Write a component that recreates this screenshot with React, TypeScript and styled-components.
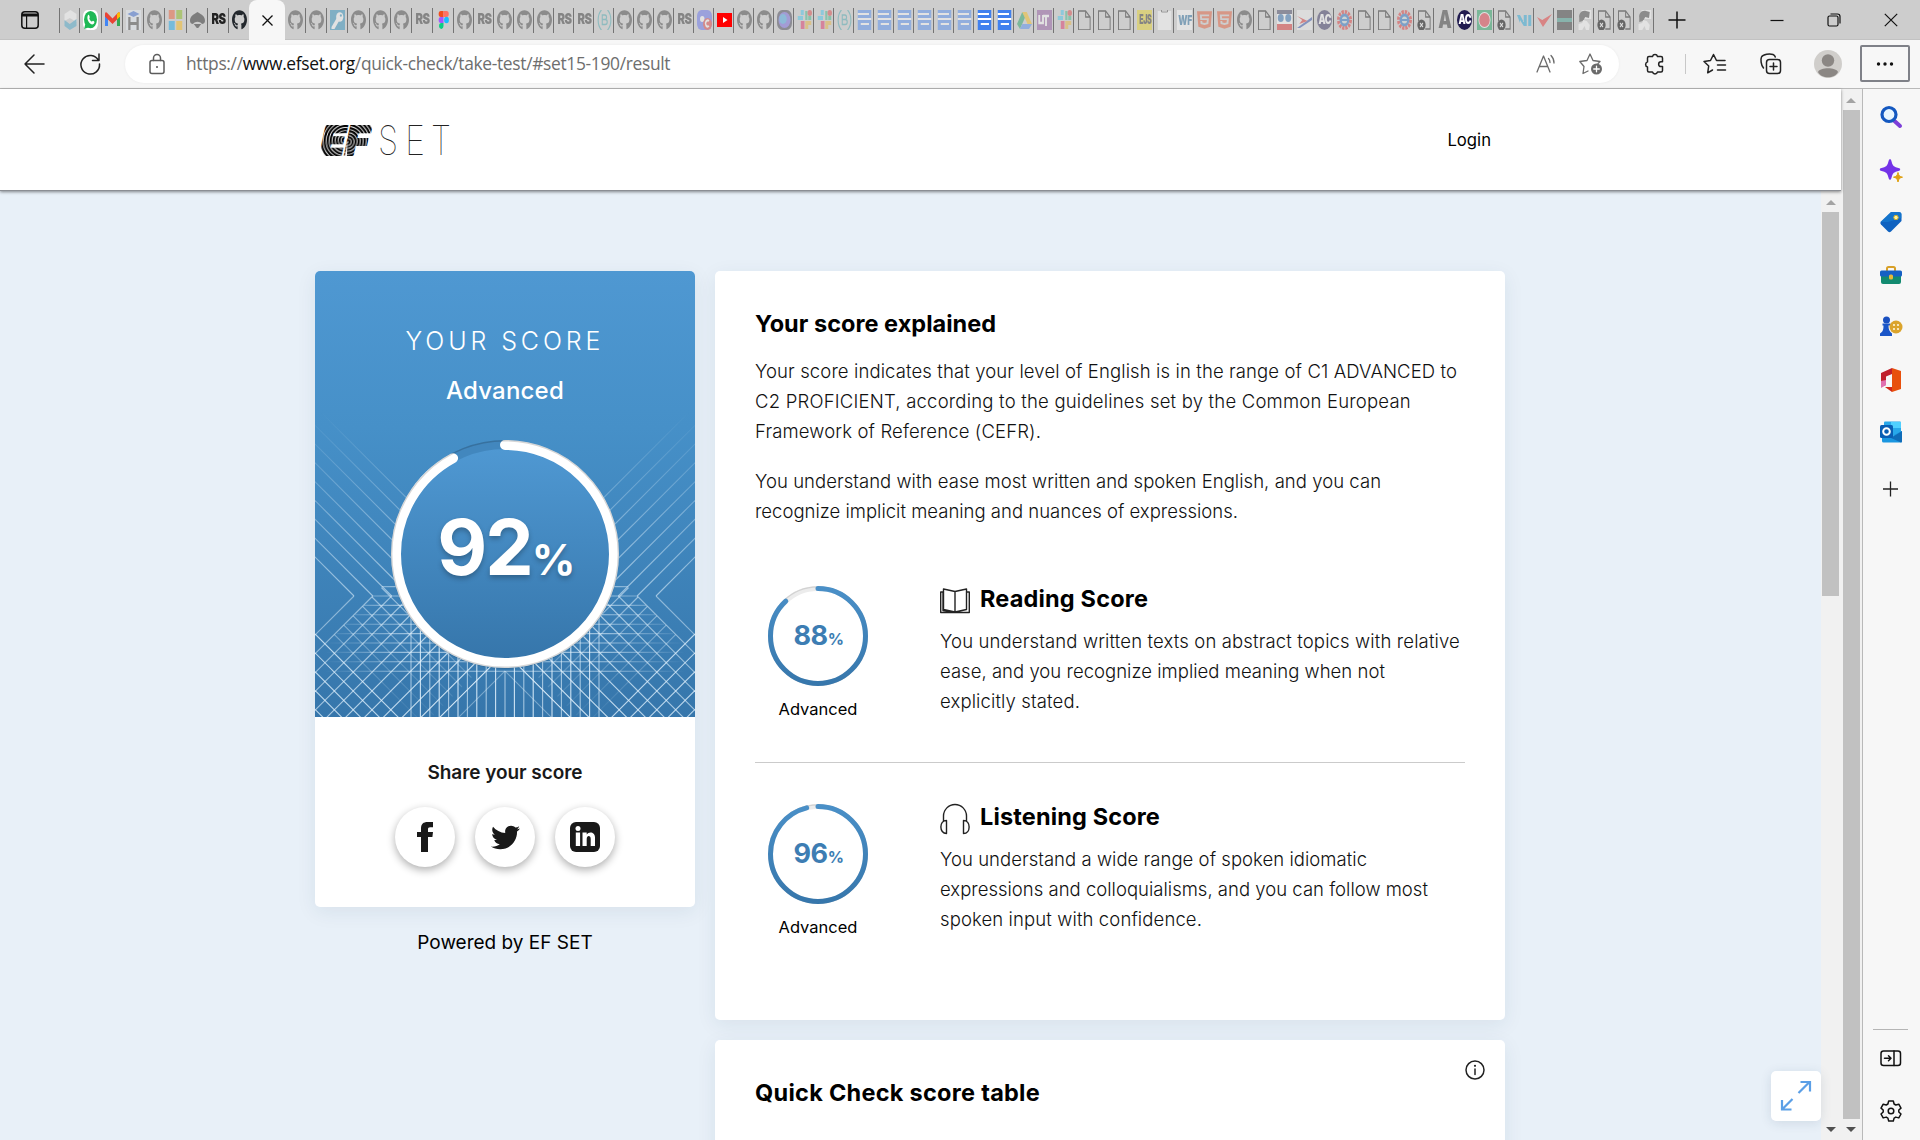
import React from "react";
import styled, { createGlobalStyle, css } from "styled-components";
import { FaGithub, FaTwitter, FaHtml5 } from "react-icons/fa";

const Global = createGlobalStyle`
  *, *::before, *::after { box-sizing: border-box; }
  body { margin: 0; background: #e8f0f8; font-family: Inter, "Liberation Sans", sans-serif; }
  p, h1, h2, h3 { margin: 0; font-weight: inherit; }
`;

const Window = styled.div`
  display: flex;
  flex-direction: column;
  width: 1920px;
  height: 1140px;
  overflow: hidden;
  background: #f7f7f7;
`;

/* ---------- tab strip ---------- */

const TabStrip = styled.div`
  display: flex;
  height: 40px;
  background: #cdcdcd;
  border-bottom: 1px solid #c2c2c2;
  flex: none;
`;
const TabActions = styled.div`
  width: 59px;
  padding: 11px 0 0 21px;
`;
const Tab = styled.div<{ $w: number; $first?: boolean; $bare?: boolean }>`
  flex: none;
  width: ${(p) => p.$w}px;
  height: 25px;
  margin-top: 8px;
  padding: 2px 0 0 3px;
  border-right: ${(p) => (p.$bare ? "0" : "1px solid #747474")};
  border-left: ${(p) => (p.$first ? "1px solid #747474" : "0")};
`;
const Favicon = styled.div<{ $dim?: boolean }>`
  width: 15px;
  height: 20px;
  display: flex;
  opacity: ${(p) => (p.$dim ? 0.42 : 1)};
  svg { width: 15px; height: 20px; display: block; flex: none; }
`;
const Letters = styled.span<{ $bg?: string; $fg: string; $size: number; $round?: boolean; $sx?: number; $sy?: number }>`
  width: 15px;
  height: 20px;
  display: flex;
  align-items: center;
  justify-content: center;
  background: ${(p) => p.$bg || "transparent"};
  color: ${(p) => p.$fg};
  border-radius: ${(p) => (p.$round ? "50%" : "0")};
  font-weight: 900;
  font-size: ${(p) => p.$size}px;
  line-height: 20px;
  letter-spacing: -0.5px;
  span { transform: scale(${(p) => p.$sx || 1}, ${(p) => p.$sy || 1}); }
`;
const ActiveTab = styled.div`
  width: 36px;
  height: 40px;
  background: #f7f7f7;
  border-radius: 8px 8px 0 0;
  display: flex;
  align-items: center;
  justify-content: center;
  flex: none;
`;
const NewTab = styled.div`
  padding: 11px 0 0 14px;
`;
const WindowButtons = styled.div`
  margin-left: auto;
  display: flex;
  align-items: center;
  gap: 43px;
  padding-right: 22px;
  height: 39px;
`;

type Kind = string;
const before: Kind[] = ["cube", "whatsapp", "gmail", "h", "gh", "ms", "hat", "RS", "GH"];
const after: Kind[] = ["gh", "gh", "key", "gh", "gh", "gh", "rs", "figma"];
const rest: Kind[] = [
  "gh", "rs", "gh", "gh", "gh", "rs", "rs", "b", "gh", "gh", "gh", "rs", "discord", "yt", "gh", "gh", "orb",
  "slack", "slack", "b", "doc", "doc", "doc", "doc", "doc", "doc", "DOC", "DOC", "drive", "ut", "slack",
  "file", "file", "file", "ejs", "bag", "wf", "html", "html", "gh", "file", "people", "flag", "ac", "e",
  "file", "file", "e", "filex", "a", "AC", "rec", "filex", "vi", "check", "bars", "gear", "filex", "filex", "gear",
];

const Box = ({ children }: { children: React.ReactNode }) => (
  <svg viewBox="0 0 20 20" preserveAspectRatio="none">{children}</svg>
);

const icons: Record<string, { dim?: boolean; el: React.ReactNode }> = {
  gh: { dim: true, el: <FaGithub color="#333" preserveAspectRatio="none" /> },
  GH: { el: <FaGithub color="#24292e" preserveAspectRatio="none" /> },
  rs: { dim: true, el: <Letters $fg="#222" $size={10.5} $sx={1.08} $sy={1.45}><span>RS</span></Letters> },
  RS: { el: <Letters $fg="#222" $size={10.5} $sx={1.08} $sy={1.45}><span>RS</span></Letters> },
  cube: { dim: true, el: <Box><path d="M10 0l8 4v8l-9-4-7 3V4z" fill="#fff" /><path d="M2 10l7 4 9-5v7l-9 4-7-4z" fill="#3aa0c8" /></Box> },
  whatsapp: { el: <Box><rect width="20" height="20" rx="6" fill="#fff" /><circle cx="10" cy="9.6" r="8.6" fill="#1fb855" /><path d="M1.5 19l1.6-5 4 3.6z" fill="#1fb855" /><path d="M6.6 5.2c.9-1 1.700-.3 2.300 1.600.4 1-.9 1.300-.3 2.300 1 1.700 2 2.200 2.900 2.500.8.200 1.100-1.200 1.900-.9 2 .9 2.100 1.300 1.600 2.300-1 1.600-3 1.900-5.500.4C6.500 11.500 4.800 8 6.600 5.200z" fill="#fff" /></Box> },
  gmail: { el: <Box><path d="M0 4v12h4V7z" fill="#4285f4" /><path d="M20 4v12h-4V7z" fill="#34a853" /><path d="M0 4c0-2 2-2 3-1l7 5.500 7-5.500c1-1 3-1 3 1v2.500L10 14 0 6.500z" fill="#ea4335" /><path d="M16 4l1-1c1-1 3-1 3 1v2.500L16 9.500z" fill="#fbbc04" /></Box> },
  h: { dim: true, el: <Box><rect width="20" height="20" fill="#e8f0fa" /><path d="M10 1l8 3-8 3-8-3z" fill="#2a62d8" /><path d="M3 7h3v5h8V7h3v13h-3v-5H6v5H3z" fill="#333" /></Box> },
  ms: { dim: true, el: <Box><path d="M1 0h8v9H1z" fill="#f25022" /><path d="M11 0h8v9h-8z" fill="#7fba00" /><path d="M1 11h8v9H1z" fill="#00a4ef" /><path d="M11 11h8v9h-8z" fill="#ffb900" /></Box> },
  hat: { dim: true, el: <Box><path d="M0 11c0-5 4-6 10-9 6 3 10 4 10 9 0 2-2 3-4 3-3-3-9-3-12 0-2 0-4-1-4-3z" fill="#111" /><path d="M5 14h10l-4 4H9z" fill="#111" /></Box> },
  key: { dim: true, el: <Box><rect width="20" height="20" fill="#1786b8" /><circle cx="13" cy="7" r="4.800" fill="#fff" /><circle cx="14.500" cy="5.500" r="1.300" fill="#1786b8" /><path d="M9 8l-7 9v2h4l6-8z" fill="#fff" /></Box> },
  figma: { el: <Box><path d="M10 1H6.500a3 3 0 000 6H10z" fill="#f24e1e" /><path d="M10 1h4a3 3 0 010 6h-4z" fill="#ff7262" /><path d="M10 7H6.500a3 3 0 000 6H10z" fill="#a259ff" /><circle cx="14" cy="10" r="3.200" fill="#1abcfe" /><path d="M10 13H6.500a3 3 0 103.500 3z" fill="#0acf83" /></Box> },
  b: { dim: true, el: <Box><g fill="none" stroke="#3aa3ac" strokeWidth="1.500"><path d="M6 0C0 5 0 15 6 20M14 0c6 5 6 15 0 20" /><path d="M7 5h3.500c3 0 3 4.500 0 4.500H7zM7 9.500h4c3.500 0 3.500 5 0 5H7z" /></g></Box> },
  discord: { dim: true, el: <Box><rect width="20" height="20" rx="6" fill="#5865f2" /><circle cx="7" cy="9" r="3" fill="#fff" /><circle cx="14" cy="14" r="6" fill="#e03030" /><path d="M16 11a3 3 0 100 5" stroke="#fff" strokeWidth="2" fill="none" /></Box> },
  yt: { el: <Box><rect y="3" width="20" height="14" fill="#f00" /><path d="M8 7l6 3-6 3z" fill="#fff" /></Box> },
  orb: { dim: true, el: <Box><rect width="20" height="20" rx="7" fill="#334" /><circle cx="10" cy="10" r="8" fill="#6a5ae0" /><circle cx="8" cy="9" r="5" fill="#38a0e8" /></Box> },
  slack: { dim: true, el: <Box><path d="M1 6h7v4H1zM5 0h4v5H5z" fill="#36c5f0" /><path d="M11 1h3v9h-3zM15 6h4v4h-4z" fill="#2eb67d" /><path d="M5 11h5v8H5z" fill="#e01e5a" /><path d="M11 11h8v4h-8zM11 15h4v4h-4z" fill="#ecb22e" /><circle cx="17" cy="3" r="3" fill="#d33" /></Box> },
  doc: { dim: true, el: <Box><path d="M1 0h18v20H1z" fill="#4285f4" /><path d="M1 4h15M1 9h18M5 14h11" stroke="#fff" strokeWidth="2" /></Box> },
  DOC: { el: <Box><path d="M1 0h18v20H1z" fill="#4080ee" /><path d="M1 4h15M1 9h18M5 14h11" stroke="#fff" strokeWidth="2" /></Box> },
  drive: { dim: true, el: <Box><path d="M7 2L0 14l4 5 7-12z" fill="#0f9d58" /><path d="M7 2h6l7 12h-6z" fill="#fbbc04" /><path d="M7 14h13l-4 5H4z" fill="#4285f4" /></Box> },
  ut: { dim: true, el: <Box><path d="M0 0h20v20H0z" fill="#8a4a9a" /><path d="M3 5v8h5V5m0 1h8M12 6v10" stroke="#fff" strokeWidth="2.500" fill="none" /></Box> },
  file: { el: <Box><path d="M2 1h9.500l6 6v13H2zM11.500 1v6h6" fill="none" stroke="#7a7a7a" strokeWidth="1.300" /></Box> },
  filex: { el: <Box><path d="M2 11V1h9.500l6 6v12H11M11.500 1v6h6" fill="none" stroke="#7a7a7a" strokeWidth="1.300" /><circle cx="6" cy="15" r="5.500" fill="#666" /><path d="M4 13l4 4m0-4l-4 4" stroke="#ddd" strokeWidth="1.300" /></Box> },
  ejs: { dim: true, el: <Letters $bg="#ead51a" $fg="#222" $size={7.5} $sx={0.95} $sy={1.8}><span>EJS</span></Letters> },
  bag: { dim: true, el: <Box><path d="M1 1h18v19H1z" fill="#fff" /><path d="M6 0v2h8V0" stroke="#333" fill="none" /></Box> },
  wf: { dim: true, el: <Letters $bg="#fff" $fg="#18639a" $size={9} $sx={0.95} $sy={1.5}><span>WF</span></Letters> },
  html: { dim: true, el: <FaHtml5 color="#e44d26" preserveAspectRatio="none" /> },
  people: { dim: true, el: <Box><path d="M0 0h20v20H0z" fill="#fff" /><path d="M0 0h20v4H0z" fill="#335" /><circle cx="5" cy="8" r="4" fill="#2266b0" /><circle cx="15" cy="8" r="4" fill="#2266b0" /><path d="M0 14h20v6H0z" fill="#d22" /></Box> },
  flag: { dim: true, el: <Box><path d="M0 0h20v20H0z" fill="#f2f2f2" /><path d="M0 18L20 7v3L4 18z" fill="#24a" /><path d="M0 6l14 5-11 3 4-4z" fill="#d22" /></Box> },
  ac: { dim: true, el: <Letters $bg="#221c50" $fg="#fff" $size={9} $sy={1.4} $round><span>AC</span></Letters> },
  AC: { el: <Letters $bg="#221c50" $fg="#fff" $size={9} $sy={1.4} $round><span>AC</span></Letters> },
  e: { dim: true, el: <Box><circle cx="10" cy="10" r="8" fill="none" stroke="#e02020" strokeWidth="4" strokeDasharray="3 1.200" /><circle cx="10" cy="10" r="5" fill="#cdd" stroke="#1464c0" strokeWidth="3" /><path d="M5 10h10" stroke="#1464c0" strokeWidth="2" /></Box> },
  a: { dim: true, el: <Letters $fg="#222" $size={17} $sy={1.4}><span>A</span></Letters> },
  rec: { dim: true, el: <Box><path d="M0 0h20v20H0z" fill="#0a9a50" /><circle cx="10" cy="10" r="8" fill="#fff" /><circle cx="10" cy="10" r="7" fill="#e02030" /></Box> },
  vi: { dim: true, el: <Box><path d="M0 5h4l5 7V5h4v11H9L4 10v3zM15 5h4v11h-4z" fill="#10a0d8" /></Box> },
  check: { dim: true, el: <Box><path d="M0 7l7 3L20 4 8 17z" fill="#e82020" /></Box> },
  bars: { dim: true, el: <Box><path d="M0 0h20v20H0z" fill="#222" /><path d="M0 8h20v4H0z" fill="#2a9080" /></Box> },
  gear: { dim: true, el: <Box><path d="M6 0h13v9H6z" fill="#fff" /><path d="M3 8C2 4 6 0 12 1l5 1-1 6-5-1-3 4-5 1z" fill="#333" /><path d="M2 20v-6l5-1 1-3 5 1 4 4-1 5h-4l-2-4-3 4z" fill="#fff" /></Box> },
};

const Fav = ({ kind }: { kind: Kind }) => (
  <Favicon $dim={icons[kind].dim}>{icons[kind].el}</Favicon>
);

/* ---------- toolbar ---------- */

const Toolbar = styled.div`
  height: 49px;
  flex: none;
  display: flex;
  align-items: center;
  background: #f7f7f7;
  border-bottom: 1px solid #b9b9b9;
  padding: 0 10px 1px 0;
`;
const NavButtons = styled.div`
  width: 125px;
  padding-left: 23px;
  display: flex;
  align-items: center;
  gap: 34px;
`;
const AddressBar = styled.div`
  width: 1494px;
  height: 38px;
  border-radius: 19px;
  background: #fff;
  box-shadow: 0 0 3px rgba(0, 0, 0, 0.06);
  display: flex;
  align-items: center;
  padding: 0 16px 0 22px;
`;
const Url = styled.div`
  margin-left: 19px;
  padding-bottom: 2px;
  flex: 1;
  font: 17.4px/24px "Open Sans", "Noto Sans", sans-serif;
  letter-spacing: -0.33px;
  color: #6e6e6e;
  white-space: nowrap;
  b { font-weight: 400; color: #111; }
`;
const BarIcons = styled.div<{ $gap: number; $left?: number }>`
  display: flex;
  align-items: center;
  gap: ${(p) => p.$gap}px;
  margin-left: ${(p) => p.$left || 0}px;
`;
const Rule = styled.div`
  width: 1px;
  height: 20px;
  background: #c8c8c8;
`;
const MenuButton = styled.div`
  margin-left: auto;
  width: 50px;
  height: 37px;
  border: 2px solid #7f8188;
  border-radius: 2px;
  display: flex;
  align-items: center;
  justify-content: center;
`;

const Line = styled.svg.attrs((p) => ({
  fill: "none",
  stroke: p.stroke || "#222",
  strokeWidth: p.strokeWidth || 1.5,
  strokeLinecap: "round" as const,
  strokeLinejoin: "round" as const,
}))`
  display: block;
  flex: none;
  overflow: visible;
`;

/* ---------- body ---------- */

const Body = styled.div`
  flex: 1;
  min-height: 0;
  display: flex;
`;
const Viewport = styled.div`
  width: 1863px;
  display: flex;
  position: relative;
  border-right: 1px solid #b9b9b9;
`;
const Page = styled.div`
  width: 1841px;
  display: flex;
  flex-direction: column;
`;
const Header = styled.header`
  height: 102px;
  flex: none;
  background: #fff;
  border-bottom: 1px solid #8b8e94;
  box-shadow: 0 1px 3px rgba(0, 0, 0, 0.45);
  z-index: 1;
  display: flex;
  justify-content: space-between;
  padding: 36px 350px 0 321px;
`;
const Content = styled.div`
  flex: 1;
  min-height: 0;
  display: flex;
`;
const Main = styled.main`
  width: 1821px;
  overflow: hidden;
  background: #e8f0f8;
  display: flex;
  align-items: flex-start;
  gap: 20px;
  padding: 80px 0 0 315px;
`;
const Scrollbar = styled.div<{ $w: number }>`
  width: ${(p) => p.$w}px;
  background: #f1f1f1;
  display: flex;
  flex-direction: column;
  align-items: center;
  padding: 9px 1px 8px 0;
`;
const Thumb = styled.div<{ $h: number; $top: number }>`
  width: 17px;
  height: ${(p) => p.$h}px;
  margin-top: ${(p) => p.$top}px;
  background: #c1c1c1;
`;
const Arrow = styled.div<{ $down?: boolean }>`
  border: 5px solid transparent;
  ${(p) =>
    p.$down
      ? css`border-top-color: #505050; border-bottom: 0; margin-top: auto;`
      : css`border-bottom-color: #a3a3a3; border-top: 0;`}
`;

const LeftColumn = styled.div`
  width: 380px;
  display: flex;
  flex-direction: column;
  align-items: center;
`;
const Card = styled.section`
  width: 100%;
  border-radius: 5px;
  overflow: hidden;
  background: #fff;
  box-shadow: 0 5px 20px rgba(25, 60, 90, 0.08);
`;
const ScoreHero = styled.div`
  position: relative;
  height: 446px;
  padding-top: 54px;
  display: flex;
  flex-direction: column;
  align-items: center;
  color: #fff;
  background: linear-gradient(#4f98d2, #4690c8 35%, #3676ab);
`;
const Backdrop = styled.svg`
  position: absolute;
  inset: 0;
`;
const Share = styled.div`
  height: 190px;
  display: flex;
  flex-direction: column;
  align-items: center;
  padding-top: 43px;
`;
const ShareRow = styled.div`
  display: flex;
  gap: 20px;
  margin-top: 21px;
`;
const ShareButton = styled.div`
  width: 60px;
  height: 60px;
  border-radius: 50%;
  background: #fff;
  box-shadow: 0 3px 9px rgba(0, 0, 0, 0.32);
  display: flex;
  align-items: center;
  justify-content: center;
  color: #191919;
`;
const RightColumn = styled.div`
  width: 790px;
  display: flex;
  flex-direction: column;
  gap: 20px;
`;
const Explained = styled(Card)`
  height: 749px;
  padding: 37px 40px 0;
`;
const TableCard = styled(Card)`
  height: 200px;
  padding: 37px 20px 0 40px;
  display: flex;
  justify-content: space-between;
  align-items: flex-start;
  & > svg { margin-top: -17px; }
`;
const Para = styled.div<{ $top: number }>`
  margin-top: ${(p) => p.$top}px;
`;
const Skill = styled.div<{ $top: number; $line?: boolean }>`
  margin-top: ${(p) => p.$top}px;
  height: 181px;
  border-bottom: ${(p) => (p.$line ? "1px solid #cbcbcb" : "0")};
  display: flex;
  gap: 72px;
  padding-left: 13px;
`;
const SkillText = styled.div`
  padding-top: 1px;
`;
const Gauge = styled.div`
  width: 100px;
  padding-top: 4px;
  display: flex;
  flex-direction: column;
  align-items: center;
  gap: 11px;
`;
const Ring = styled.div<{ $size: number }>`
  width: ${(p) => p.$size}px;
  height: ${(p) => p.$size}px;
  flex: none;
  display: grid;
  place-items: center;
  & > * { grid-area: 1 / 1; }
`;
const BigRing = styled(Ring)`
  margin-top: 32.5px;
  z-index: 1;
`;
const Percent = styled.div<{ $pad: number; $shadow?: boolean }>`
  display: flex;
  align-items: baseline;
  padding-bottom: ${(p) => p.$pad}px;
  text-shadow: ${(p) => (p.$shadow ? "0 3px 5px rgba(0,0,0,.25)" : "none")};
`;
const SkillTitle = styled.div`
  display: flex;
  gap: 10px;
  height: 43px;
  & > svg { margin-top: 4px; }
`;

type TextProps = { $size: number; $lh: number; $weight: number; $ls?: number; $color?: string };
const Text = styled.div<TextProps>`
  font-size: ${(p) => p.$size}px;
  line-height: ${(p) => p.$lh}px;
  font-weight: ${(p) => p.$weight};
  letter-spacing: ${(p) => p.$ls || 0}px;
  color: ${(p) => p.$color || "inherit"};
  white-space: nowrap;
  width: max-content;
`;
const BodyLine = ({ children, ls }: { children: string; ls: number }) => (
  <Text $size={18.5} $lh={30} $weight={300} $color="#111" $ls={ls}>{children}</Text>
);
const Heading = ({ children, ls }: { children: string; ls: number }) => (
  <Text as="h2" $size={23.5} $lh={32} $weight={700} $color="#000" $ls={ls}>{children}</Text>
);

const SidePanel = styled.aside`
  flex: 1;
  display: flex;
  flex-direction: column;
  align-items: center;
  padding: 15px 2px 17px 0;
  background: #f7f7f7;
`;
const SideSlot = styled.div`
  height: 52.5px;
  display: flex;
  padding-top: 1px;
  svg { width: 24px; height: 24px; display: block; }
`;
const SideRule = styled.div`
  width: 35px;
  height: 1px;
  background: #b5b5b5;
  margin-top: auto;
  margin-bottom: 18px;
`;
const Expand = styled.div`
  position: absolute;
  left: 1771px;
  top: 982px;
  width: 50px;
  height: 50px;
  z-index: 2;
  border-radius: 5px;
  background: #fff;
  box-shadow: 0 2px 12px rgba(25, 60, 90, 0.12);
  display: flex;
  align-items: center;
  justify-content: center;
`;

const Arc = ({ size, stroke, pct, big }: { size: number; stroke: number; pct: number; big?: boolean }) => {
  const r = (size - stroke) / 2;
  const c = 2 * Math.PI * r;
  const id = `g${pct}`;
  const mid = size / 2;
  return (
    <svg width={size} height={size} viewBox={`0 0 ${size} ${size}`} overflow="visible">
      <defs>
        <linearGradient id={id} x1="0" y1="0" x2="0" y2="1">
          <stop offset="0" stopColor="#4f98d2" />
          <stop offset="1" stopColor="#3676ab" />
        </linearGradient>
        {/* the arc is rotated by -90deg, so its vertical axis runs along -x */}
        <linearGradient id={`arc-${id}`} gradientUnits="userSpaceOnUse" x1={size} y1="0" x2="0" y2="0">
          <stop offset="0" stopColor="#4a90c8" />
          <stop offset="1" stopColor="#3676ab" />
        </linearGradient>
      </defs>
      {big && <circle cx={mid} cy={mid + 1} r={mid} fill="rgba(0,0,0,.1)" />}
      <circle cx={mid} cy={mid} r={r} fill={big ? `url(#${id})` : "none"} stroke={big ? "#4287be" : "#ececec"} strokeWidth={stroke} />
      {big && <circle cx={mid} cy={mid} r={r - stroke / 2 + 1} fill={`url(#${id})`} />}
      {!big && <circle cx={mid} cy={mid} r={mid - 0.8} fill="none" stroke="#d2d2d2" strokeWidth="1.2" />}
      <circle
        cx={mid} cy={mid} r={r} fill="none" stroke={big ? "#fff" : `url(#arc-${id})`}
        strokeWidth={stroke} strokeLinecap="round" strokeDasharray={`${(c * pct) / 100} ${c}`}
        transform={`rotate(-90 ${mid} ${mid})`}
      />
      {big && <circle cx={mid} cy={mid} r={mid - 0.7} fill="none" stroke="rgba(0,0,0,.16)" strokeWidth="1.4" />}
    </svg>
  );
};

const step = 56.5 / 3;
const HalfGrid = () => {
  const els: React.ReactNode[] = [];
  for (let k = 0; k <= 12; k++) {
    const vx = 39 + step * k;
    if (k <= 8) els.push(<path key={`u${k}`} d={`M${vx} 325l-200 -200`} opacity={0.6} mask="url(#upper)" />);
    els.push(<path key={`d${k}`} d={`M${vx} 325l-160 160`} opacity={k === 12 ? 0.4 : 0.5 + k * 0.04} />);
  }
  for (let j = 0; j < 5; j++) els.push(<path key={`l${j}`} d={`M0 ${363 + step * j}l120 120`} opacity="0.8" />);
  for (let j = 1; j < 7; j++)
    els.push(<path key={`f${j}`} d={`M${10 + j * 9.4} ${373 - j * 9.4}l90 90`} opacity="0.6" mask="url(#fade)" />);
  for (let i = 0; i < 10; i++)
    els.push(<path key={`h${i}`} d={`M${Math.max(10, 67 - i * 9)} ${315.6 + i * 9.4}H190`} opacity={0.6} mask="url(#side)" />);
  for (let i = 0; i <= 10; i++)
    els.push(<path key={`v${i}`} d={`M${96 + i * 9.4} ${345 + i * 5.5}V446`} opacity={i % 2 ? 0.9 : 0.65} />);
  return <>{els}</>;
};

const ScoreBackdrop = () => (
  <Backdrop width="380" height="446" viewBox="0 0 380 446">
    <defs>
      <linearGradient id="mu" gradientUnits="userSpaceOnUse" x1="0" y1="140" x2="0" y2="325">
        <stop offset="0" stopColor="#000" /><stop offset=".6" stopColor="#aaa" /><stop offset="1" stopColor="#fff" />
      </linearGradient>
      <linearGradient id="mf" gradientUnits="userSpaceOnUse" x1="0" y1="320" x2="0" y2="435">
        <stop offset="0" stopColor="#fff" /><stop offset="1" stopColor="#222" />
      </linearGradient>
      <linearGradient id="ms" gradientUnits="userSpaceOnUse" x1="10" y1="0" x2="90" y2="0">
        <stop offset="0" stopColor="#000" /><stop offset="1" stopColor="#fff" />
      </linearGradient>
      <mask id="upper" maskUnits="userSpaceOnUse" x="-200" y="0" width="600" height="446"><rect x="-200" width="600" height="446" fill="url(#mu)" /></mask>
      <mask id="fade" maskUnits="userSpaceOnUse" x="-200" y="0" width="600" height="446"><rect x="-200" width="600" height="446" fill="url(#mf)" /></mask>
      <mask id="side" maskUnits="userSpaceOnUse" x="-200" y="0" width="600" height="446"><rect x="-200" width="600" height="446" fill="url(#ms)" /></mask>
      <clipPath id="half"><rect width="190" height="446" /></clipPath>
    </defs>
    <g stroke="#dff0fc" strokeWidth="1.1" fill="none">
      <g clipPath="url(#half)"><HalfGrid /></g>
      <g transform="translate(380 0) scale(-1 1)"><g clipPath="url(#half)"><HalfGrid /></g></g>
    </g>
  </Backdrop>
);

const Logo = () => (
  <svg width="130" height="32" viewBox="0 0 130 32" overflow="visible">
    <defs>
      <pattern id="stripes" patternUnits="userSpaceOnUse" x="-2" width="62" height="40">
        <rect width="62" height="40" fill="#fff" />
        <g fill="none" stroke="#000" strokeWidth="2.100">
          {[2, 5, 8, 11, 14, 17, 20, 23].map((r) => <circle key={r} cx="25" cy="15" r={r} />)}
        </g>
        <path d="M30 0h32v40H25z" fill="#fff" />
        <g fill="none" stroke="#000" strokeWidth="2.100">
          {[2, 5, 8, 11, 14, 17, 20, 23, 26].map((r) => <path key={r} d={`M28 ${17 - r}A${r} ${r} 0 0 1 28 ${17 + r}`} />)}
        </g>
      </pattern>
    </defs>
    <g transform="translate(1.500 0) skewX(-3)">
      <text x="-1" y="30" fontFamily="Inter, sans-serif" fontWeight="900" fontStyle="italic" fontSize="40" textLength="48" lengthAdjust="spacingAndGlyphs" fill="url(#stripes)" stroke="url(#stripes)" strokeWidth="1.800">EF</text>
    </g>
    <g fontFamily="Inter, Lato, sans-serif" fontWeight="100" fontSize="41" fill="#222">
      <text x="57" y="30" textLength="20" lengthAdjust="spacingAndGlyphs">S</text>
      <text x="84" y="30" textLength="20" lengthAdjust="spacingAndGlyphs">E</text>
      <text x="110" y="30" textLength="20" lengthAdjust="spacingAndGlyphs">T</text>
    </g>
  </svg>
);

const blue = "#3d7db3";

const SkillGauge = ({ pct }: { pct: number }) => (
  <Gauge>
    <Ring $size={100}>
      <Arc size={100} stroke={5} pct={pct} />
      <Percent $pad={1}>
        <Text $size={27} $lh={28} $weight={700} $color={blue} $ls={-0.4}>{pct}</Text>
        <Text $size={16} $lh={20} $weight={700} $color={blue} $ls={-1.5}>%</Text>
      </Percent>
    </Ring>
    <Text $size={16.5} $lh={24} $weight={400} $color="#000">Advanced</Text>
  </Gauge>
);

export default function App() {
  return (
    <Window>
      <Global />
      <TabStrip>
        <TabActions>
          <svg width="18" height="18" viewBox="0 0 18 18"><rect x=".8" y=".8" width="16.400" height="16.400" rx="3" fill="none" stroke="#111" strokeWidth="1.500" /><path d="M1 2.500h16v3H1zM5 5h1.200v12H5z" fill="#111" /></svg>
        </TabActions>
        {before.map((k, i) => <Tab key={i} $w={i === 8 ? 20 : 21.25} $first={i === 0} $bare={i === 8}><Fav kind={k} /></Tab>)}
        <ActiveTab>
          <svg width="11" height="13" viewBox="0 0 11 13"><path d="M.5 1.500l10 10m0-10l-10 10" stroke="#111" strokeWidth="1.300" /></svg>
        </ActiveTab>
        {after.map((k, i) => <Tab key={i} $w={i === 0 ? 21 : 21.2}><Fav kind={k} /></Tab>)}
        {rest.map((k, i) => <Tab key={i} $w={20}><Fav kind={k} /></Tab>)}
        <NewTab>
          <svg width="18" height="18" viewBox="0 0 18 18"><path d="M9 .5v17M.5 9h17" stroke="#111" strokeWidth="1.500" /></svg>
        </NewTab>
        <WindowButtons>
          <svg width="14" height="14" viewBox="0 0 14 14"><path d="M.5 7.500h13" stroke="#111" strokeWidth="1.200" /></svg>
          <svg width="14" height="14" viewBox="0 0 14 14" fill="none" stroke="#111" strokeWidth="1.200"><rect x="1" y="3" width="10" height="10" rx="1.500" /><path d="M3.500 1h7q2.500 0 2.500 2.500v7" /></svg>
          <svg width="14" height="14" viewBox="0 0 14 14"><path d="M.8.8l12.400 12.400m0-12.400L.8 13.200" stroke="#111" strokeWidth="1.200" /></svg>
        </WindowButtons>
      </TabStrip>

      <Toolbar>
        <NavButtons>
          <Line width="22" height="22" viewBox="0 0 22 22"><path d="M21 11H2M11 2l-9 9 9 9" /></Line>
          <Line width="22" height="24" viewBox="0 0 22 24"><path d="M19.500 8.500A9.300 9.300 0 1 0 20.500 12M20 2v6.500h-6.500" /></Line>
        </NavButtons>
        <AddressBar>
          <Line width="20" height="22" viewBox="0 0 20 22" stroke="#5c5c5c"><rect x="3" y="7.500" width="14" height="13" rx="2" /><path d="M6.500 7.500V5a3.500 3.500 0 017 0v2.500" /><circle cx="10" cy="14" r="1" fill="#555" stroke="none" /></Line>
          <Url>https://<b>www.efset.org</b>/quick-check/take-test/#set15-190/result</Url>
          <BarIcons $gap={22}>
            <Line width="22" height="22" viewBox="0 0 22 22" stroke="#6b6b6b" strokeWidth={1.3}><path d="M2 19L8.500 3 15 19M4.500 13.500h8M13.500 5.500c1 1 1.500 2.500 1.500 4M16 2.500c2 2 3 4.500 3 7.500" /></Line>
            <Line width="24" height="22" viewBox="0 0 24 22" stroke="#6b6b6b" strokeWidth={1.3}><path d="M9 18l-5 2.500 1-7L.8 8.500 8 7.500 11 1l3 6.500 7 1-2 2" /><circle cx="17.500" cy="16" r="5.500" fill="#6b6b6b" stroke="none" /><path d="M17.500 13.200v5.600M14.700 16h5.600" stroke="#fff" /></Line>
          </BarIcons>
        </AddressBar>
        <BarIcons $gap={19} $left={25}>
          <Line width="22" height="22" viewBox="0 0 22 22"><path d="M5 3.500h3.500a2.600 2.600 0 015 0H17q1.500 0 1.500 1.500v3.800H17a2.300 2.300 0 000 4.700h1.500v4q0 1.500-1.500 1.500h-3.500a2.600 2.600 0 01-5 0H5q-1.500 0-1.500-1.500v-3.600a2.600 2.600 0 010-5V5q0-1.500 1.500-1.500z" /></Line>
          <Rule />
        </BarIcons>
        <BarIcons $gap={32.5} $left={17}>
          <Line width="24" height="22" viewBox="0 0 24 22"><path d="M9.500 17l-4.800 2.800 1-6.800L1 8.500l6.500-1L10.500 1.500l3 6h8.500M14.500 12h8M14.500 17h8" /></Line>
          <Line width="22" height="22" viewBox="0 0 22 22"><rect x="6.500" y="6.500" width="14" height="14" rx="3" /><path d="M13.500 10v7M10 13.500h7M3.500 15C.8 12 .5 6 1.500 4 3 1 10 .5 13 1.500c1.200.5 2 1.500 2.300 2.500" /></Line>
          <svg width="28" height="28" viewBox="0 0 28 28"><circle cx="14" cy="14" r="14" fill="#d0cecb" /><circle cx="14" cy="10.500" r="6.200" fill="#8b8784" /><path d="M4 22c2-5 18-5 20 0-3 7-17 7-20 0z" fill="#8b8784" /></svg>
        </BarIcons>
        <MenuButton>
          <svg width="18" height="4" viewBox="0 0 18 4" fill="#111"><circle cx="2.500" cy="2" r="1.700" /><circle cx="9" cy="2" r="1.700" /><circle cx="15.500" cy="2" r="1.700" /></svg>
        </MenuButton>
      </Toolbar>

      <Body>
        <Viewport>
          <Page>
            <Header>
              <Logo />
              <Para $top={1}><Text $size={16.7} $lh={28} $weight={400} $color="#000">Login</Text></Para>
            </Header>
            <Content>
              <Main>
                <LeftColumn>
                  <Card>
                    <ScoreHero>
                      <ScoreBackdrop />
                      <Text $size={25} $lh={32} $weight={280} $ls={3.9}>YOUR SCORE</Text>
                      <Para $top={18}><Text $size={24} $lh={32} $weight={500} $ls={0.2}>Advanced</Text></Para>
                      <BigRing $size={228}>
                        <Arc size={228} stroke={10} pct={92} big />
                        <Percent $pad={14} $shadow>
                          <Text $size={77} $lh={76} $weight={700} $ls={-2}>92</Text>
                          <Text $size={43} $lh={50} $weight={700} $ls={-2.5}>%</Text>
                        </Percent>
                      </BigRing>
                    </ScoreHero>
                    <Share>
                      <Text $size={19} $lh={26} $weight={600} $color="#191919" $ls={-0.05}>Share your score</Text>
                      <ShareRow>
                        <ShareButton>
                          <svg width="16" height="30" viewBox="0 0 16 30"><path d="M4 30V15H0v-5h4V6.500C4 2 6.500 0 10.500 0H16v5.300h-2.800c-1.800 0-2.200.8-2.200 2.200V10h5l-.6 5H11v15z" fill="#191919" /></svg>
                        </ShareButton>
                        <ShareButton><FaTwitter size={29} /></ShareButton>
                        <ShareButton>
                          <svg width="30" height="30" viewBox="0 0 30 30"><rect width="30" height="30" rx="6" fill="#191919" /><circle cx="8" cy="6.500" r="2.500" fill="#fff" /><path d="M5.800 10.500h4.300V24H5.800zM12.500 10.500h4.200v2c2-3.300 8.300-3 8.300 3V24h-4.300v-7c0-4-4-3.700-4 0v7h-4.200z" fill="#fff" /></svg>
                        </ShareButton>
                      </ShareRow>
                    </Share>
                  </Card>
                  <Para $top={23}><Text $size={19} $lh={26} $weight={400} $color="#000">Powered by EF SET</Text></Para>
                </LeftColumn>
                <RightColumn>
                  <Explained>
                    <Heading ls={0.03}>Your score explained</Heading>
                    <Para $top={16}>
                      <BodyLine ls={0.115}>Your score indicates that your level of English is in the range of C1 ADVANCED to</BodyLine>
                      <BodyLine ls={0.206}>C2 PROFICIENT, according to the guidelines set by the Common European</BodyLine>
                      <BodyLine ls={0.136}>Framework of Reference (CEFR).</BodyLine>
                    </Para>
                    <Para $top={20}>
                      <BodyLine ls={0.045}>You understand with ease most written and spoken English, and you can</BodyLine>
                      <BodyLine ls={0.007}>recognize implicit meaning and nuances of expressions.</BodyLine>
                    </Para>
                    <Skill $top={56} $line>
                      <SkillGauge pct={88} />
                      <SkillText>
                        <SkillTitle>
                          <Line width="30" height="30" viewBox="0 0 30 30" strokeWidth={1.4}><path d="M3 5H.7v20.500h28.600V5H27M15 4.500L3.500 2v20.500L15 25l11.500-2.500V2zM15 4.500V25M3 5v18.500L14 25" /></Line>
                          <Heading ls={0.17}>Reading Score</Heading>
                        </SkillTitle>
                        <BodyLine ls={0.14}>You understand written texts on abstract topics with relative</BodyLine>
                        <BodyLine ls={0.027}>ease, and you recognize implied meaning when not</BodyLine>
                        <BodyLine ls={0.127}>explicitly stated.</BodyLine>
                      </SkillText>
                    </Skill>
                    <Skill $top={37}>
                      <SkillGauge pct={96} />
                      <SkillText>
                        <SkillTitle>
                          <Line width="30" height="30" viewBox="0 0 30 30" strokeWidth={1.4}><path d="M3.500 16V11a11.500 11.500 0 0123 0v5M6.500 15.500v13C-1 28.500-1 15.500 6.500 15.500zM23.500 15.500v13c7.500 0 7.500-13 0-13z" /></Line>
                          <Heading ls={0.14}>Listening Score</Heading>
                        </SkillTitle>
                        <BodyLine ls={0.043}>You understand a wide range of spoken idiomatic</BodyLine>
                        <BodyLine ls={0.013}>expressions and colloquialisms, and you can follow most</BodyLine>
                        <BodyLine ls={0.114}>spoken input with confidence.</BodyLine>
                      </SkillText>
                    </Skill>
                  </Explained>
                  <TableCard>
                    <Heading ls={0.27}>Quick Check score table</Heading>
                    <Line width="20" height="20" viewBox="0 0 20 20"><circle cx="10" cy="10" r="9" /><path d="M10 9v5.500" /><circle cx="10" cy="5.800" r="1.100" fill="#222" stroke="none" /></Line>
                  </TableCard>
                </RightColumn>
              </Main>
              <Scrollbar $w={20}>
                <Arrow />
                <Thumb $h={384} $top={7} />
                <Arrow $down />
              </Scrollbar>
            </Content>
          </Page>
          <Scrollbar $w={21}>
            <Arrow />
            <Thumb $h={1009} $top={7} />
            <Arrow $down />
          </Scrollbar>
          <Expand>
            <svg width="32" height="32" viewBox="0 0 32 32" fill="none" stroke="#5b9fe6" strokeWidth="2.200"><path d="M18.500 13L29.500 2M20.500 2h9.500v9.500M12.500 19L2 29.500M2 20v9.500h9.500" /></svg>
          </Expand>
        </Viewport>
        <SidePanel>
          <SideSlot>
            <svg viewBox="0 0 24 24"><path d="M15.500 16l5.500 5" stroke="#7d3fd8" strokeWidth="4" strokeLinecap="round" /><circle cx="10" cy="9.500" r="7" fill="#e8f6ff" stroke="#1458c0" strokeWidth="3.200" /></svg>
          </SideSlot>
          <SideSlot>
            <svg viewBox="0 0 24 24"><path d="M11 2.500c1.300 6 3 7.700 9 9-6 1.300-7.700 3-9 9-1.300-6-3-7.700-9-9 6-1.300 7.700-3 9-9z" fill="#7433e8" stroke="#7433e8" strokeWidth="2.400" strokeLinejoin="round" /><path d="M19 14.500c.7 3 1.500 4 4.500 4.700-3 .7-3.800 1.500-4.500 4.800-.7-3.300-1.500-4.100-4.500-4.800 3-.7 3.800-1.700 4.500-4.700z" fill="#e0a010" stroke="#e0a010" /></svg>
          </SideSlot>
          <SideSlot>
            <svg viewBox="0 0 24 24"><path d="M12 2h8q2.500 0 2.500 2.500V11L12 21.500q-1.500 1.500-3 0L2 14.500q-1.500-1.500 0-3z" fill="#0f62c0" /><path d="M12 2L1.500 12 9 12 22.500 8V4.500Q22.500 2 20 2z" fill="#1a86d8" opacity=".5" /><circle cx="17" cy="7.500" r="2.200" fill="#fff3a0" stroke="#d8b020" /></svg>
          </SideSlot>
          <SideSlot>
            <svg viewBox="0 0 24 24"><path d="M8 8V5.500Q8 4 9.500 4h5Q16 4 16 5.500V8" fill="none" stroke="#d8a028" strokeWidth="2" /><path d="M2 11h20v8q0 2-2 2H4q-2 0-2-2z" fill="#128a70" /><rect x="1" y="7.500" width="22" height="6" rx="1.500" fill="#1660c4" /><rect x="10" y="11.500" width="4" height="5" rx="1.500" fill="#e8b838" /></svg>
          </SideSlot>
          <SideSlot>
            <svg viewBox="0 0 24 24"><circle cx="7.500" cy="5" r="3.500" fill="#1a50c0" /><path d="M3.500 8.500h8v2h-2c0 4 1 6 3.500 8v2.500H1V18.500c3-2 3.500-4 3.500-8h-1z" fill="#1a56c8" /><circle cx="17" cy="12" r="6.500" fill="#dba42c" /><circle cx="15" cy="10" r="1.100" fill="#fff6d8" /><circle cx="19" cy="10" r="1.100" fill="#fff6d8" /><circle cx="15" cy="14" r="1.100" fill="#fff6d8" /><circle cx="19" cy="14" r="1.100" fill="#fff6d8" /></svg>
          </SideSlot>
          <SideSlot>
            <svg viewBox="0 0 24 24"><path d="M13 0l9 3v18l-9 3z" fill="#e8500c" /><path d="M13 0v6L7 8.500V17l-5 2V5z" fill="#c0202c" /><path d="M2 13l5-1v5l-5 3z" fill="#e070b0" /><path d="M6 19h7v5z" fill="#d02818" /></svg>
          </SideSlot>
          <SideSlot>
            <svg viewBox="0 0 24 24"><rect x="5" y="1.500" width="17" height="14" rx="1" fill="#28a8ea" /><path d="M12 2h10v6H12z" fill="#50d0ff" /><path d="M3 12l10 4 10-5v10q0 1.500-1.500 1.500h-17Q3 22.500 3 21z" fill="#1a96e0" /><path d="M23 11L12 18l10 4.500q1 0 1-1.500z" fill="#0f6cb8" /><rect x="1" y="5" width="13" height="13" rx="1.500" fill="#0a5eb4" /><circle cx="7.500" cy="11.500" r="3.300" fill="none" stroke="#fff" strokeWidth="2" /></svg>
          </SideSlot>
          <SideSlot>
            <svg viewBox="0 0 24 24"><path d="M11.500 8.500v15M4 16h15" stroke="#222" strokeWidth="1.300" /></svg>
          </SideSlot>
          <SideRule />
          <Line width="22" height="20" viewBox="0 0 22 20" stroke="#111"><rect x="1" y="3" width="19.500" height="14.500" rx="2.500" /><path d="M14 3v14.500M4.500 10.200H11M8.500 7.700l2.500 2.500-2.500 2.500" /></Line>
          <Para $top={31}>
            <Line width="22" height="24" viewBox="0 0 22 24" stroke="#111"><circle cx="11" cy="12" r="2.800" /><path d="M8.700 2h4.600l.8 3 1.700 1 3-.8 2.200 3.900L18.800 11v2l2.200 2-2.200 3.900-3-.8-1.700 1-.8 3H8.700l-.8-3-1.700-1-3 .8L1 15l2.200-2v-2L1 9.100l2.200-3.900 3 .8 1.700-1z" /></Line>
          </Para>
        </SidePanel>
      </Body>
    </Window>
  );
}
